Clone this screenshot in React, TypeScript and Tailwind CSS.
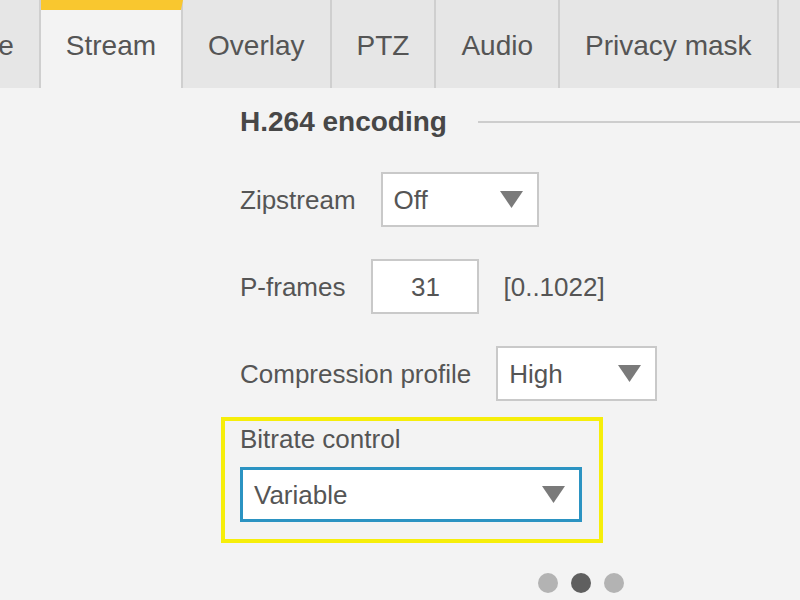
import React from "react";

const tabs = [
  { label: "Image", active: false },
  { label: "Stream", active: true },
  { label: "Overlay", active: false },
  { label: "PTZ", active: false },
  { label: "Audio", active: false },
  { label: "Privacy mask", active: false },
  { label: "Events", active: false },
];

function Caret() {
  return (
    <svg width="23" height="17" viewBox="0 0 23 17" className="shrink-0">
      <polygon points="0,0 23,0 11.5,17" fill="#7a7a7a" />
    </svg>
  );
}

function Select({ value, width, blue }: { value: string; width: string; blue?: boolean }) {
  return (
    <div
      className={`flex h-[55px] items-center justify-between bg-white pl-[11px] pr-[14px] ${width} ${
        blue ? "border-[3px] border-[#2b93c2]" : "border-2 border-[#c9c9c9]"
      }`}
    >
      <span>{value}</span>
      <Caret />
    </div>
  );
}

export default function App() {
  return (
    <div
      className="h-[600px] w-[800px] overflow-hidden bg-[#f3f3f3] text-[26px] leading-[30px] text-[#555]"
      style={{ fontFamily: '"Liberation Sans", Arial, sans-serif' }}
    >
      {/* tab strip, scrolled so the first tab is partly hidden */}
      <div className="flex h-[88px] overflow-hidden bg-[#e6e6e6] text-[28px] leading-[32px]">
        <div className="-ml-[89px] flex">
          {tabs.map((t) => (
            <div
              key={t.label}
              className={`flex shrink-0 items-center whitespace-nowrap border-r-2 border-r-[#cfcfcf] px-[25px] ${
                t.active ? "border-t-[10px] border-t-[#f9c72f] bg-[#f3f3f3] pb-[7px]" : "pt-[3px]"
              }`}
            >
              {t.label}
            </div>
          ))}
        </div>
      </div>

      <div className="ml-[221px] flex flex-col">
        {/* section heading */}
        <div className="mt-[18px] flex items-center pl-[19px]">
          <h2 className="text-[28px] font-bold leading-[32px] text-[#474747]">H.264 encoding</h2>
          <div className="ml-[31px] h-[2px] flex-1 bg-[#cdcdcd]" />
        </div>

        <div className="mt-[34px] flex flex-col gap-[32px] pl-[19px]">
          <div className="flex items-center">
            <span>Zipstream</span>
            <div className="ml-[25px]">
              <Select value="Off" width="w-[158px]" />
            </div>
          </div>

          <div className="flex items-center">
            <span>P-frames</span>
            <div className="ml-[26px] flex h-[55px] w-[108px] items-center justify-center border-2 border-[#c9c9c9] bg-white">
              31
            </div>
            <span className="ml-[24px]">[0..1022]</span>
          </div>

          <div className="flex items-center">
            <span>Compression profile</span>
            <div className="ml-[25px]">
              <Select value="High" width="w-[161px]" />
            </div>
          </div>
        </div>

        {/* highlighted bitrate control */}
        <div className="mt-[16px] w-[382px] border-4 border-[#f6ee0a] pb-[17px] pl-[15px] pt-[3px]">
          <div>Bitrate control</div>
          <div className="mt-[13px]">
            <Select value="Variable" width="w-[342px]" blue />
          </div>
        </div>

        {/* pager dots */}
        <div className="ml-[317px] mt-[30px] flex gap-[13px]">
          <div className="h-[20px] w-[20px] rounded-full bg-[#b3b3b3]" />
          <div className="h-[20px] w-[20px] rounded-full bg-[#5f5f5f]" />
          <div className="h-[20px] w-[20px] rounded-full bg-[#b3b3b3]" />
        </div>
      </div>
    </div>
  );
}
